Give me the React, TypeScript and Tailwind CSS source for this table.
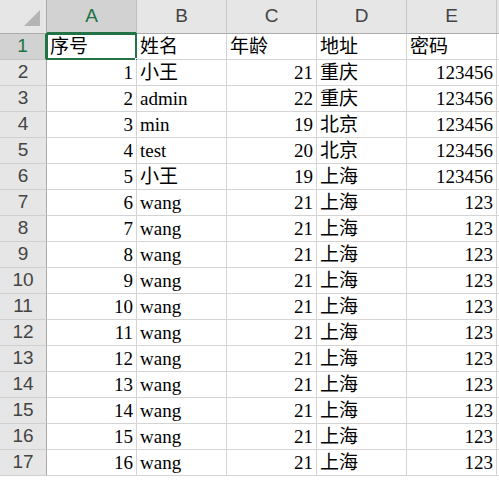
import React from "react";

const cols = ["A", "B", "C", "D", "E"];

type Row = [string, string, string, string, string];

const rows: Row[] = [
  ["序号", "姓名", "年龄", "地址", "密码"],
  ["1", "小王", "21", "重庆", "123456"],
  ["2", "admin", "22", "重庆", "123456"],
  ["3", "min", "19", "北京", "123456"],
  ["4", "test", "20", "北京", "123456"],
  ["5", "小王", "19", "上海", "123456"],
  ["6", "wang", "21", "上海", "123"],
  ["7", "wang", "21", "上海", "123"],
  ["8", "wang", "21", "上海", "123"],
  ["9", "wang", "21", "上海", "123"],
  ["10", "wang", "21", "上海", "123"],
  ["11", "wang", "21", "上海", "123"],
  ["12", "wang", "21", "上海", "123"],
  ["13", "wang", "21", "上海", "123"],
  ["14", "wang", "21", "上海", "123"],
  ["15", "wang", "21", "上海", "123"],
  ["16", "wang", "21", "上海", "123"],
];

const cellFont = { fontFamily: '"Liberation Serif", "Noto Sans CJK SC", serif' };
const headFont = { fontFamily: '"Liberation Sans", Arial, sans-serif' };

function Cell({ value, first }: { value: string; first: boolean }) {
  // numbers right, text left, like excel does
  const isNum = !first && /^\d+$/.test(value);
  return (
    <div
      className={`h-[26px] border-r border-b border-[#d4d4d4] bg-white flex items-end overflow-hidden whitespace-nowrap text-[19px] leading-none text-black pb-[3px] ${
        isNum ? "justify-end pr-[3px]" : "justify-start pl-[3px]"
      }`}
      style={cellFont}
    >
      {value}
    </div>
  );
}

export default function App() {
  return (
    <div className="w-[499px] h-[480px] overflow-hidden bg-white select-none">
      <div className="grid grid-cols-[47px_90px_90px_90px_90px_90px_1fr]">
        {/* corner */}
        <div className="h-[34px] bg-[#e6e6e6] border-r border-b border-[#ababab] flex items-end justify-end pr-[6px] pb-[7px]">
          <svg width="16" height="16" viewBox="0 0 16 16">
            <polygon points="16,0 16,16 0,16" fill="#b4b4b4" />
          </svg>
        </div>
        {cols.map((c) => (
          <div
            key={c}
            className={`h-[34px] border-r flex items-center justify-center text-[19px] ${
              c === "A"
                ? "bg-[#d2d2d2] border-[#c0c0c0] border-b-2 border-b-[#217346] text-[#217346]"
                : "bg-[#e6e6e6] border-[#c6c6c6] border-b border-b-[#ababab] text-[#444444]"
            }`}
            style={headFont}
          >
            {c}
          </div>
        ))}
        <div className="h-[34px] bg-[#e6e6e6] border-b border-[#ababab]" />

        {rows.map((r, i) => (
          <React.Fragment key={i}>
            <div
              className={`h-[26px] border-r border-b flex items-center justify-center text-[19px] ${
                i === 0
                  ? "bg-[#d2d2d2] border-r-2 border-r-[#217346] border-b-[#c6c6c6] text-[#217346]"
                  : "bg-[#e6e6e6] border-r-[#ababab] border-b-[#d0d0d0] text-[#444444]"
              }`}
              style={headFont}
            >
              {i + 1}
            </div>
            {r.map((v, j) => (
              <div key={j} className="relative">
                <Cell value={v} first={i === 0} />
                {i === 0 && j === 0 && (
                  <>
                    <div className="absolute left-[-1px] top-[-1px] w-[91px] h-[27px] border-2 border-[#217346] pointer-events-none" />
                    <div className="absolute right-[-4px] bottom-[-4px] w-[6px] h-[6px] bg-[#217346] border border-white" />
                  </>
                )}
              </div>
            ))}
            <div className="h-[26px] border-b border-[#d4d4d4] bg-white" />
          </React.Fragment>
        ))}
      </div>
    </div>
  );
}
